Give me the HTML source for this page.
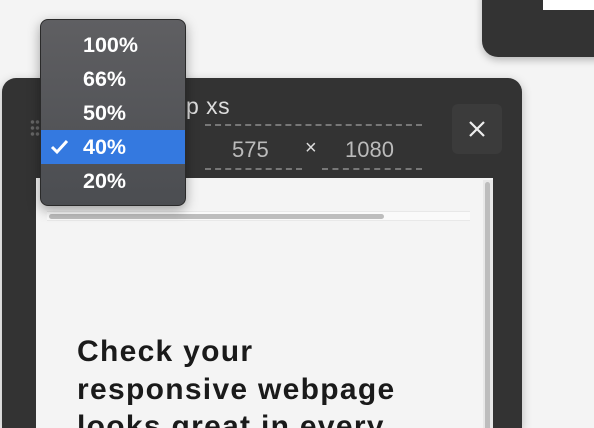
<!DOCTYPE html>
<html style="width:594px;height:428px;overflow:hidden"><head><style>
*{margin:0;padding:0;box-sizing:border-box}
body{width:594px;height:428px;overflow:hidden;background:#f4f4f4;position:relative;font-family:"Liberation Sans",sans-serif}
.tr{position:absolute;left:482px;top:-20px;width:140px;height:77px;background:#333;border-radius:16px;box-shadow:0 3px 8px rgba(0,0,0,.25)}
.tr i{position:absolute;left:61px;top:20px;width:60px;height:10px;background:#fff}
.main{position:absolute;left:2px;top:78px;width:520px;height:350px;background:#333;border-radius:14px 14px 0 0;box-shadow:0 3px 10px rgba(0,0,0,.25)}
.title{position:absolute;left:186px;top:93px;color:#ddd;font-size:23px;letter-spacing:.5px}
.dash{position:absolute;height:0;border-top:2px dashed #777}
.num{position:absolute;color:#bbb;font-size:22px;top:137px}
.close{position:absolute;left:452px;top:104px;width:50px;height:50px;background:#3b3b3b;border-radius:6px}
.frame{position:absolute;left:36px;top:178px;width:457px;height:250px;background:#f4f4f4}
.vs{position:absolute;left:483px;top:180px;width:10px;height:248px;background:#e8e8e8}
.vs i{position:absolute;left:2px;top:2px;width:5px;height:250px;background:#bdbdbd;border-radius:3px}
.hs{position:absolute;left:47px;top:211px;width:423px;height:10px;background:#fafafa;border-top:1px solid #e8e8e8;border-bottom:1px solid #e8e8e8}
.hs i{position:absolute;left:2px;top:2px;width:335px;height:5px;background:#bdbdbd;border-radius:3px}
h1{position:absolute;left:77px;top:333px;font-size:30px;line-height:37.5px;font-weight:bold;color:#1a1a1a;letter-spacing:1.3px;width:345px}
.dots{position:absolute;left:30px;top:119px;width:10px;height:18px;background-image:radial-gradient(circle,#666 1.5px,transparent 2px);background-size:5px 6px}
.menu{position:absolute;left:40px;top:19px;width:146px;height:187px;border-radius:8px;background:linear-gradient(#5f5f62,#4b4d51);border:1px solid #2a2a2a;box-shadow:0 4px 12px rgba(0,0,0,.35);overflow:hidden}
.it{position:absolute;left:0;width:146px;height:34px;color:#fff;font-size:21.5px;font-weight:bold;line-height:34px;padding-left:42px}
.sel{background:#3479e0}
</style></head><body>
<div class="tr"><i></i></div>
<div class="main"></div>
<div class="title">p xs</div>
<div class="dash" style="left:205px;top:124px;width:217px"></div>
<div class="num" style="left:232px">575</div>
<div class="num" style="left:305px;font-size:20px;top:137px;color:#ddd">×</div>
<div class="num" style="left:345px">1080</div>
<div class="dash" style="left:205px;top:168px;width:97px"></div>
<div class="dash" style="left:322px;top:168px;width:100px"></div>
<div class="close"><svg width="50" height="50"><path d="M18 18L32 32M32 18L18 32" stroke="#eee" stroke-width="2.2"/></svg></div>
<div class="frame"></div>
<div class="vs"><i></i></div>
<div class="hs"><i></i></div>
<h1>Check your responsive webpage looks great in every</h1>
<div class="dots"></div>
<div class="menu">
<div class="it" style="top:8px">100%</div>
<div class="it" style="top:42px">66%</div>
<div class="it" style="top:76px">50%</div>
<div class="it sel" style="top:110px"><svg style="position:absolute;left:9px;top:9px" width="20" height="16"><path d="M2 8L7 13L17 2" stroke="#fff" stroke-width="3" fill="none"/></svg>40%</div>
<div class="it" style="top:144px">20%</div>
</div>
</body></html>
